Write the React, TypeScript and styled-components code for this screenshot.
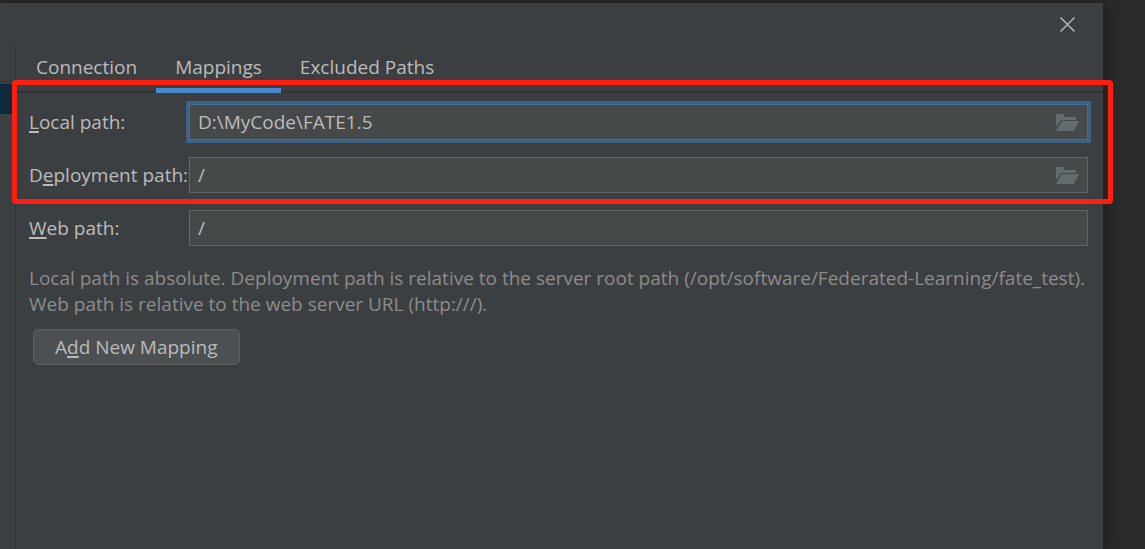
import React from "react";
import styled, { createGlobalStyle } from "styled-components";

const GlobalStyle = createGlobalStyle`
  * { box-sizing: border-box; }
  body {
    margin: 0;
    background: #2b2b2b;
    color: #bbbbbb;
    font: 19px/26px "Open Sans", "Noto Sans", sans-serif;
  }
  button, input { font: inherit; color: inherit; }
`;

const Page = styled.div`
  display: flex;
  min-height: 100vh;
  padding: 3px 42px 0 0;
`;

const Dialog = styled.section`
  position: relative;
  flex: 1;
  display: flex;
  flex-direction: column;
  background: #3c3f41;
  box-shadow: 0 0 16px 2px rgba(0, 0, 0, 0.35);
`;

const TitleBar = styled.header`
  display: flex;
  justify-content: flex-end;
  align-items: center;
  height: 42px;
  padding-right: 24px;
`;

const CloseButton = styled.button`
  display: flex;
  padding: 4px;
  border: 0;
  background: none;
`;

const Body = styled.div`
  flex: 1;
  display: flex;
`;

const ServerList = styled.aside`
  width: 15px;
  padding-top: 36px;
`;

const SelectedServer = styled.div`
  height: 33px;
  border-top: 1px solid #323232;
  padding-top: 2px;
  background: #0d293e content-box;
`;

const Main = styled.main`
  flex: 1;
  border-left: 1px solid #313335;
`;

const Tabs = styled.nav`
  display: flex;
  height: 48px;
  padding-left: 1px;
  box-shadow: inset 0 -2px #323232;
`;

const Tab = styled.button<{ $active?: boolean }>`
  padding: 0 19px;
  border: 0;
  border-bottom: 5px solid ${(p) => (p.$active ? "#4a88c7" : "transparent")};
  background: none;
`;

const Form = styled.form`
  display: flex;
  flex-direction: column;
  gap: 17px;
  padding: 11px 15px 0 13px;
`;

const Row = styled.div`
  display: flex;
  align-items: center;
`;

const Label = styled.label`
  width: 160px;
  white-space: nowrap;
`;

const Mnemonic = styled.span`
  text-decoration: underline;
  text-decoration-thickness: 2px;
  text-underline-offset: 2px;
  text-decoration-skip-ink: none;
`;

const Field = styled.div<{ $focused?: boolean }>`
  flex: 1;
  display: flex;
  align-items: center;
  height: 36px;
  padding-right: 8px;
  border: 1px solid ${(p) => (p.$focused ? "#466d94" : "#646464")};
  background: #45494a;
  box-shadow: ${(p) => (p.$focused ? "0 0 0 3px #3d6185" : "none")};
`;

const Input = styled.input`
  flex: 1;
  min-width: 0;
  padding: 0 8px;
  border: 0;
  outline: 0;
  background: none;
`;

const BrowseButton = styled.button`
  display: flex;
  padding: 0;
  border: 0;
  background: none;
`;

const Hint = styled.p`
  margin: 2px 0 0;
  color: #8c8c8c;
`;

const AddButton = styled.button`
  align-self: flex-start;
  height: 36px;
  margin: -5px 0 0 4px;
  padding: 0 21px;
  border: 1px solid #5e6060;
  border-radius: 5px;
  background: #4c5052;
  box-shadow: 0 1px #35383a;
`;

const Highlight = styled.div`
  position: absolute;
  top: 77px;
  left: 12px;
  right: -10px;
  height: 124px;
  border: 5px solid #ff1f10;
  border-radius: 4px;
  pointer-events: none;
`;

const Browse = ({ label }: { label: string }) => (
  <BrowseButton type="button" aria-label={label}>
    <svg width="24" height="18" viewBox="0 0 24 18" fill="#636b6f">
      <path d="M1 1H8L10 4H21V7H6L1 14Z" />
      <path d="M7 8H24L19 18H1Z" />
    </svg>
  </BrowseButton>
);

export default function App() {
  return (
    <Page>
      <GlobalStyle />
      <Dialog>
        <TitleBar>
          <CloseButton aria-label="Close">
            <svg width="15" height="15" viewBox="0 0 15 15" stroke="#b4b5b6" strokeWidth="1.5">
              <path d="M.5 .5L14.5 14.5M14.5 .5L.5 14.5" />
            </svg>
          </CloseButton>
        </TitleBar>
        <Body>
          <ServerList>
            <SelectedServer />
          </ServerList>
          <Main>
            <Tabs>
              <Tab>Connection</Tab>
              <Tab $active>Mappings</Tab>
              <Tab>Excluded Paths</Tab>
            </Tabs>
            <Form>
              <Row>
                <Label htmlFor="local"><Mnemonic>L</Mnemonic>ocal path:</Label>
                <Field $focused>
                  <Input id="local" defaultValue="D:\MyCode\FATE1.5" />
                  <Browse label="Browse local path" />
                </Field>
              </Row>
              <Row>
                <Label htmlFor="deployment">D<Mnemonic>e</Mnemonic>ployment path:</Label>
                <Field>
                  <Input id="deployment" defaultValue="/" />
                  <Browse label="Browse deployment path" />
                </Field>
              </Row>
              <Row>
                <Label htmlFor="web"><Mnemonic>W</Mnemonic>eb path:</Label>
                <Field>
                  <Input id="web" defaultValue="/" />
                </Field>
              </Row>
              <Hint>
                Local path is absolute. Deployment path is relative to the server root path (/opt/software/Federated-Learning/fate_test).
                <br />
                Web path is relative to the web server URL (http:///).
              </Hint>
              <AddButton type="button">A<Mnemonic>d</Mnemonic>d New Mapping</AddButton>
            </Form>
          </Main>
        </Body>
        <Highlight />
      </Dialog>
    </Page>
  );
}
